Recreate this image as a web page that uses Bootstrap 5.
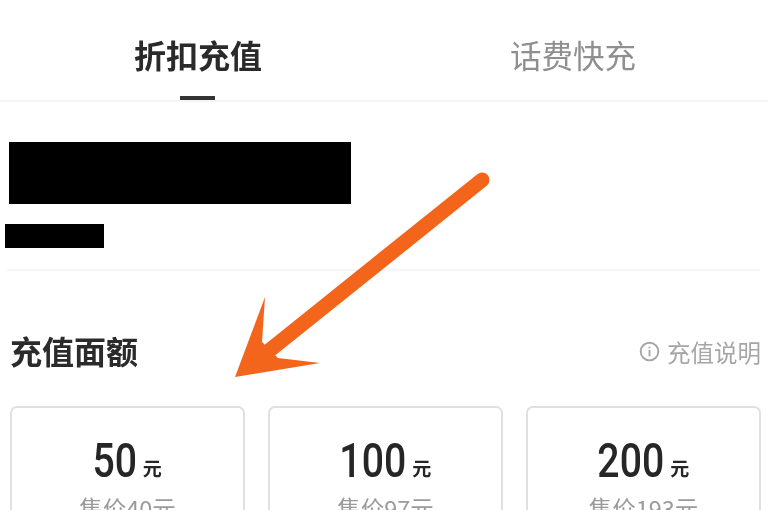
<!DOCTYPE html>
<html lang="zh">
<head>
<meta charset="utf-8">
<title>充值</title>
<link href="https://cdn.jsdelivr.net/npm/bootstrap@5.3.0/dist/css/bootstrap.min.css" rel="stylesheet">
<style>
html,body{height:510px;overflow:hidden;background:#fff}
body{font-family:"Noto Sans CJK SC","Noto Sans",sans-serif;position:relative;color:#2b2b2b;filter:blur(.45px)}
.tabbar{height:102px;border-bottom:2px solid #f5f5f5}
.tabcell{padding-top:32px;line-height:44px;text-align:center;position:relative}
.tabcell.first{width:396px}
.tabcell.second{width:354px}
.tab-on{font-weight:700;color:#2a2a2a;font-size:32px}
.tab-off{color:#8f8f8f;font-size:31.5px}
.tabmark{position:absolute;left:180px;bottom:0;width:35px;height:4px;background:#333}
.mask-a{width:342px;height:62px;background:#000;margin:40px 0 0 9px}
.mask-b{width:99px;height:24px;background:#000;margin:20px 0 0 5px}
.rule-line{height:2px;background:#f6f6f6;margin:21px 8px 0 7px}
.sec-head{padding:0 7px 0 10px;margin-top:59px;height:40px}
.sec-title{font-size:32px;font-weight:700;line-height:40px;color:#2b2b2b}
.sec-help{font-size:23.5px;line-height:40px;color:#a6a6a6;padding-top:3px}
.sec-help svg{width:21px;height:21px;margin-right:7px}
.cards{padding:0 7px 0 10px;margin-top:36px;gap:23px}
.pricebox{flex:1 1 0;height:170px;border:2px solid #e0e0e0;border-radius:7px;padding-top:23px;text-align:center}
.amount{font-size:49px;line-height:60px;color:#262626;font-family:"Roboto",sans-serif;font-weight:500}
.digits{display:inline-block;transform:scaleX(.8)}
.two{margin:0 -6px}
.three{margin:0 -8.5px}
.unit{font-size:19px;font-weight:700;margin-left:6px;position:relative;top:-1px;font-family:"Noto Sans CJK SC",sans-serif}
.sale{font-size:23.5px;line-height:30px;margin-top:-6px;color:#9a9a9a}
.arrow-draw{position:absolute;left:0;top:0;width:768px;height:510px;pointer-events:none}
</style>
</head>
<body>
<div class="tabbar d-flex">
  <div class="tabcell first"><span class="tab-on">折扣充值</span><div class="tabmark"></div></div>
  <div class="tabcell second"><span class="tab-off">话费快充</span></div>
</div>
<div class="mask-a"></div>
<div class="mask-b"></div>
<div class="rule-line"></div>
<div class="sec-head d-flex justify-content-between align-items-center">
  <div class="sec-title">充值面额</div>
  <div class="sec-help d-flex align-items-center">
    <svg viewBox="0 0 20 20" fill="none" stroke="#a6a6a6" stroke-width="1.8"><circle cx="10" cy="10" r="8.4"/><path d="M10 5.5v1.5M10 8.5v6"/></svg>充值说明
  </div>
</div>
<div class="cards d-flex">
  <div class="pricebox"><div class="amount"><span class="digits two">50</span><span class="unit">元</span></div><div class="sale">售价40元</div></div>
  <div class="pricebox"><div class="amount"><span class="digits three">100</span><span class="unit">元</span></div><div class="sale">售价97元</div></div>
  <div class="pricebox"><div class="amount"><span class="digits three">200</span><span class="unit">元</span></div><div class="sale">售价193元</div></div>
</div>
<svg class="arrow-draw" viewBox="0 0 768 510">
  <path d="M482 180 L270 350" stroke="#f4651c" stroke-width="15" stroke-linecap="round" fill="none"/>
  <path d="M265 297 L235 377 L320 363 L278 358 L262 342 Z" fill="#f4651c"/>
</svg>
</body>
</html>
